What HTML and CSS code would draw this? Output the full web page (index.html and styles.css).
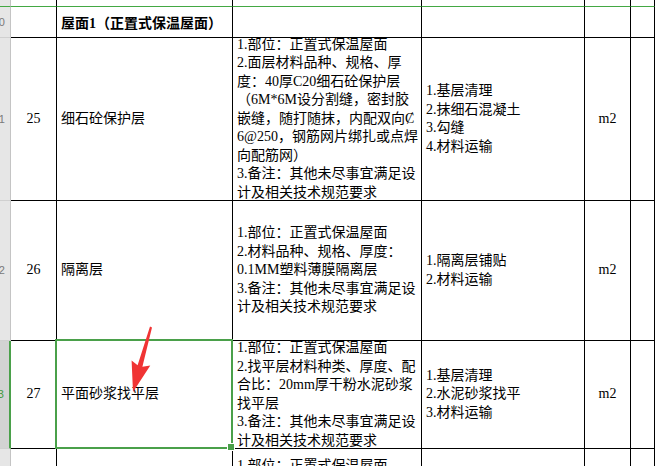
FILE: index.html
```html
<!DOCTYPE html>
<html lang="zh-CN">
<head>
<meta charset="utf-8">
<title>工程量清单</title>
<link rel="stylesheet" href="styles.css">
</head>
<body>
<div class="sheet">
  <!-- row 19 (top sliver) -->
  <div class="rh top"></div>
  <div class="c top"></div><div class="c top"></div><div class="c top"></div><div class="c top"></div><div class="c top"></div><div class="c top"></div>

  <!-- row 20 -->
  <div class="rh"><span>20</span></div>
  <div class="c"></div>
  <div class="c title"><div class="txt">屋面1（正置式保温屋面）</div></div>
  <div class="c"></div><div class="c"></div><div class="c"></div><div class="c"></div>

  <!-- row 21 -->
  <div class="rh"><span>21</span></div>
  <div class="c num"><div class="txt">25</div></div>
  <div class="c"><div class="txt">细石砼保护层</div></div>
  <div class="c"><div class="txt">1.部位：正置式保温屋面<br>2.面层材料品种、规格、厚<br>度：40厚C20细石砼保护层<br>（6M*6M设分割缝，密封胶<br>嵌缝，随打随抹，内配双向Ȼ<br>6@250，钢筋网片绑扎或点焊<br>向配筋网）<br>3.备注：其他未尽事宜满足设<br>计及相关技术规范要求</div></div>
  <div class="c"><div class="txt">1.基层清理<br>2.抹细石混凝土<br>3.勾缝<br>4.材料运输</div></div>
  <div class="c num"><div class="txt">m2</div></div>
  <div class="c"></div>

  <!-- row 22 -->
  <div class="rh"><span>22</span></div>
  <div class="c num"><div class="txt">26</div></div>
  <div class="c"><div class="txt">隔离层</div></div>
  <div class="c"><div class="txt">1.部位：正置式保温屋面<br>2.材料品种、规格、厚度：<br>0.1MM塑料薄膜隔离层<br>3.备注：其他未尽事宜满足设<br>计及相关技术规范要求</div></div>
  <div class="c"><div class="txt">1.隔离层铺贴<br>2.材料运输</div></div>
  <div class="c num"><div class="txt">m2</div></div>
  <div class="c"></div>

  <!-- row 23 (selected) -->
  <div class="rh sel"><span>23</span></div>
  <div class="c num"><div class="txt">27</div></div>
  <div class="c"><div class="txt">平面砂浆找平层</div></div>
  <div class="c"><div class="txt">1.部位：正置式保温屋面<br>2.找平层材料种类、厚度、配<br>合比：20mm厚干粉水泥砂浆<br>找平层<br>3.备注：其他未尽事宜满足设<br>计及相关技术规范要求</div></div>
  <div class="c"><div class="txt">1.基层清理<br>2.水泥砂浆找平<br>3.材料运输</div></div>
  <div class="c num"><div class="txt">m2</div></div>
  <div class="c"></div>

  <!-- row 24 (only its top edge is visible) -->
  <div class="rh last"></div>
  <div class="c last"></div>
  <div class="c last"></div>
  <div class="c last first-line"><div class="txt">1.部位：正置式保温屋面</div></div>
  <div class="c last"></div>
  <div class="c last"></div>
  <div class="c last"></div>

  <div class="selection"><div class="handle"></div></div>

  <svg class="arrow" width="655" height="466" viewBox="0 0 655 466" aria-hidden="true">
    <polygon fill="#f03434" points="150.0,326.6 137.6,365.3 131.6,360.6 133,392 150.3,365.6 142.4,366.7 152.0,327.4"/>
  </svg>
</div>
</body>
</html>
```

FILE: styles.css
```css
html, body {
  margin: 0;
  padding: 0;
  background: #ffffff;
}

body {
  width: 655px;
  height: 466px;
  overflow: hidden;
}

.sheet {
  position: relative;
  display: grid;
  grid-template-columns: 11px 46px 176px 189px 163px 46px 24px;
  grid-template-rows: 7px 31px 163px 140px 108px 17px;
  font-family: "Liberation Serif", "Noto Sans CJK SC", serif;
  font-size: 14px;
  line-height: 18.5px;
  color: #000;
}

.c {
  box-sizing: border-box;
  border-right: 1px solid #000;
  border-bottom: 1px solid #000;
  display: flex;
  align-items: center;
  overflow: hidden;
  padding: 0 3px 0 4px;
  background: #fff;
}

.c.top {
  border-bottom: 1px solid #43a843;
}

.c.last {
  border-bottom: none;
}

.c.first-line {
  align-items: flex-start;
  padding-top: 8px;
}

.txt {
  white-space: nowrap;
}

.c.num {
  justify-content: center;
  padding: 0;
}

.c.title {
  align-items: center;
  padding-top: 4px;
  font-weight: bold;
}

.rh {
  box-sizing: border-box;
  background: #e6e6e6;
  border-right: 1px solid #c4c4c4;
  border-bottom: 1px solid #d0d0d0;
  display: flex;
  align-items: center;
  justify-content: flex-end;
  overflow: hidden;
  padding-right: 5px;
  font-family: "Liberation Sans", "Noto Sans", sans-serif;
  font-size: 11px;
  color: #7a7a7a;
}

.rh span {
  white-space: nowrap;
}

.rh.top {
  border-bottom: 1px solid #43a843;
}

.rh.last {
  border-bottom: none;
}

.rh.sel {
  background: #d3d3d3;
  border-right: 2px solid #4aa04a;
  color: #3f9a3f;
}

.selection {
  position: absolute;
  left: 55px;
  top: 339px;
  width: 178px;
  height: 110px;
  box-sizing: border-box;
  border: 2px solid #4aa04a;
  pointer-events: none;
}

.handle {
  position: absolute;
  right: -4px;
  bottom: -4px;
  width: 6px;
  height: 6px;
  background: #4aa04a;
  border: 1px solid #fff;
  box-sizing: content-box;
}

.arrow {
  position: absolute;
  left: 0;
  top: 0;
  pointer-events: none;
}
```
